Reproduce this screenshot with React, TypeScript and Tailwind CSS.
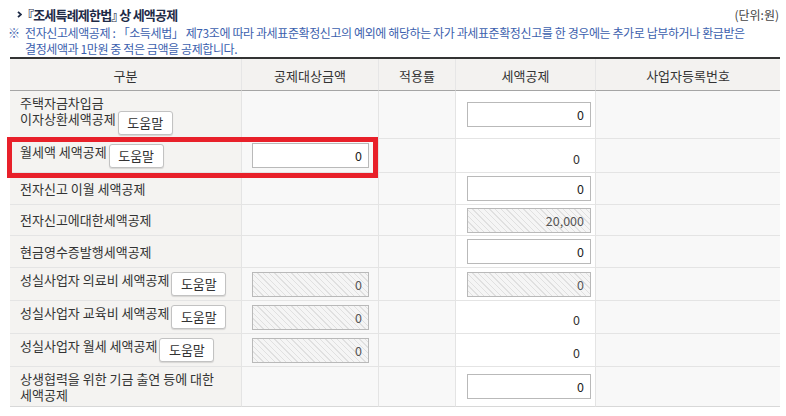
import React from "react";

const LABEL =
  "flex items-center pl-[10px] bg-[#f4f3f1] border-b border-r border-[#e4e4e4] text-[13px] text-[#333]";
const GRAY = "bg-[#f8f8f8] border-b border-r border-[#e4e4e4]";
const LAST = "bg-[#f8f8f8] border-b border-[#e4e4e4]";
const WHITE = "bg-white border-b border-r border-[#e4e4e4]";

function HelpBtn({ ml }: { ml: string }) {
  return (
    <button
      className={
        "inline-flex items-center justify-center align-top w-[55px] h-[24px] bg-white border border-[#c2c2c2] rounded-[3px] shadow-[0_1px_1px_rgba(0,0,0,0.12)] text-[13px] text-[#333] " +
        ml
      }
    >
      도움말
    </button>
  );
}

function Inp({ value, w, disabled }: { value: string; w: string; disabled?: boolean }) {
  return (
    <input
      readOnly
      value={value}
      className={
        "h-[25px] border border-[#b9b9b9] text-right pr-[6px] text-[12.5px] outline-none " +
        w +
        (disabled
          ? " bg-[repeating-linear-gradient(45deg,#f5f5f5_0px,#f5f5f5_3px,#e0e0e0_3px,#e0e0e0_4px)] text-[#555]"
          : " bg-white text-[#222]")
      }
    />
  );
}

function Plain({ h }: { h: string }) {
  return (
    <div className={WHITE + " flex items-center justify-end pr-[15px] pt-[7px] text-[12.5px] text-[#333] " + h}>
      0
    </div>
  );
}

export default function App() {
  return (
    <div className="w-[786px] h-[416px] overflow-hidden bg-white font-['Noto_Sans_CJK_KR',sans-serif] text-[#333]">
      {/* title */}
      <div className="flex items-center justify-between h-[25px] pt-[4px] pl-[17px] pr-[7px]">
        <div className="flex items-center">
          <svg width="5" height="7" viewBox="0 0 5 7" className="mr-[-1px]">
            <path d="M1 0.8 L4 3.5 L1 6.2" fill="none" stroke="#1e2b47" strokeWidth="1.8" />
          </svg>
          <span className="text-[13px] font-bold tracking-[-0.8px] text-[#1e2b47] leading-[17px]">
            『조세특례제한법<span className="tracking-[-5px]">』</span>상 세액공제
          </span>
        </div>
        <span className="text-[12px] text-[#444]">(단위:원)</span>
      </div>

      {/* note */}
      <div className="flex pl-[8px] text-[12px] leading-[16px] text-[#3c5fae] tracking-[-0.4px] whitespace-nowrap">
        <span className="w-[17px] shrink-0">※</span>
        <div>
          전자신고세액공제 : 「소득세법」 제73조에 따라 과세표준확정신고의 예외에 해당하는 자가 과세표준확정신고를 한 경우에는 추가로 납부하거나 환급받은
          <br />
          결정세액과 1만원 중 적은 금액을 공제합니다.
        </div>
      </div>

      {/* table */}
      <div className="relative ml-[10px] w-[770px]">
        <div className="grid grid-cols-[232px_137px_77px_140px_184px] border-t-2 border-[#333]">
          {/* header */}
          {["구분", "공제대상금액", "적용률", "세액공제", "사업자등록번호"].map((t, i) => (
            <div
              key={t}
              className={
                "h-[32px] pt-[2px] flex items-center justify-center bg-[#f3f2f0] border-b border-b-[#a5a5a5] text-[13px] text-[#333] " +
                (i < 4 ? "border-r border-r-[#e6e6e6]" : "")
              }
            >
              {t}
            </div>
          ))}

          {/* row 1 */}
          <div className={LABEL + " h-[48px]"}>
            <div className="leading-[16px]">
              주택자금차입금
              <br />
              이자상환세액공제
              <HelpBtn ml="ml-[2px]" />
            </div>
          </div>
          <div className={GRAY + " h-[48px]"} />
          <div className={GRAY + " h-[48px]"} />
          <div className={WHITE + " h-[48px] flex items-center pl-[11px]"}>
            <Inp value="0" w="w-[124px]" />
          </div>
          <div className={LAST + " h-[48px]"} />

          {/* row 2 */}
          <div className={LABEL + " h-[34px]"}>
            <div className="leading-[16px]">
              월세액 세액공제
              <HelpBtn ml="ml-[2px]" />
            </div>
          </div>
          <div className={GRAY + " h-[34px] flex items-center pl-[10px]"}>
            <Inp value="0" w="w-[117px]" />
          </div>
          <div className={GRAY + " h-[34px]"} />
          <Plain h="h-[34px]" />
          <div className={LAST + " h-[34px]"} />

          {/* row 3 */}
          <div className={LABEL + " h-[32px]"}>전자신고 이월 세액공제</div>
          <div className={GRAY + " h-[32px]"} />
          <div className={GRAY + " h-[32px]"} />
          <div className={WHITE + " h-[32px] flex items-center pl-[11px]"}>
            <Inp value="0" w="w-[124px]" />
          </div>
          <div className={LAST + " h-[32px]"} />

          {/* row 4 */}
          <div className={LABEL + " h-[31px]"}>전자신고에대한세액공제</div>
          <div className={GRAY + " h-[31px]"} />
          <div className={GRAY + " h-[31px]"} />
          <div className={WHITE + " h-[31px] flex items-center pl-[11px]"}>
            <Inp value="20,000" w="w-[124px]" disabled />
          </div>
          <div className={LAST + " h-[31px]"} />

          {/* row 5 */}
          <div className={LABEL + " h-[32px]"}>현금영수증발행세액공제</div>
          <div className={GRAY + " h-[32px]"} />
          <div className={GRAY + " h-[32px]"} />
          <div className={WHITE + " h-[32px] flex items-center pl-[11px]"}>
            <Inp value="0" w="w-[124px]" />
          </div>
          <div className={LAST + " h-[32px]"} />

          {/* row 6 */}
          <div className={LABEL + " h-[33px]"}>
            <div className="leading-[16px]">
              성실사업자 의료비 세액공제
              <HelpBtn ml="ml-[2px]" />
            </div>
          </div>
          <div className={GRAY + " h-[33px] flex items-center pl-[10px]"}>
            <Inp value="0" w="w-[117px]" disabled />
          </div>
          <div className={GRAY + " h-[33px]"} />
          <div className={WHITE + " h-[33px] flex items-center pl-[11px]"}>
            <Inp value="0" w="w-[124px]" disabled />
          </div>
          <div className={LAST + " h-[33px]"} />

          {/* row 7 */}
          <div className={LABEL + " h-[33px]"}>
            <div className="leading-[16px]">
              성실사업자 교육비 세액공제
              <HelpBtn ml="ml-[2px]" />
            </div>
          </div>
          <div className={GRAY + " h-[33px] flex items-center pl-[10px]"}>
            <Inp value="0" w="w-[117px]" disabled />
          </div>
          <div className={GRAY + " h-[33px]"} />
          <Plain h="h-[33px]" />
          <div className={LAST + " h-[33px]"} />

          {/* row 8 */}
          <div className={LABEL + " h-[33px]"}>
            <div className="leading-[16px]">
              성실사업자 월세 세액공제
              <HelpBtn ml="ml-[2px]" />
            </div>
          </div>
          <div className={GRAY + " h-[33px] flex items-center pl-[10px]"}>
            <Inp value="0" w="w-[117px]" disabled />
          </div>
          <div className={GRAY + " h-[33px]"} />
          <Plain h="h-[33px]" />
          <div className={LAST + " h-[33px]"} />

          {/* row 9 */}
          <div className={LABEL + " h-[40px] border-b-[#d8d8d8]"}>
            <div className="leading-[16px]">
              상생협력을 위한 기금 출연 등에 대한
              <br />
              세액공제
            </div>
          </div>
          <div className={GRAY + " h-[40px] border-b-[#d8d8d8]"} />
          <div className={GRAY + " h-[40px] border-b-[#d8d8d8]"} />
          <div className={WHITE + " h-[40px] flex items-center pl-[11px] border-b-[#d8d8d8]"}>
            <Inp value="0" w="w-[124px]" />
          </div>
          <div className={LAST + " h-[40px] border-b-[#d8d8d8]"} />
        </div>

        {/* red annotation box */}
        <div className="absolute left-[-3px] top-[80px] w-[371px] h-[41px] border-[5px] border-[#e8202a] pointer-events-none" />
      </div>
    </div>
  );
}
